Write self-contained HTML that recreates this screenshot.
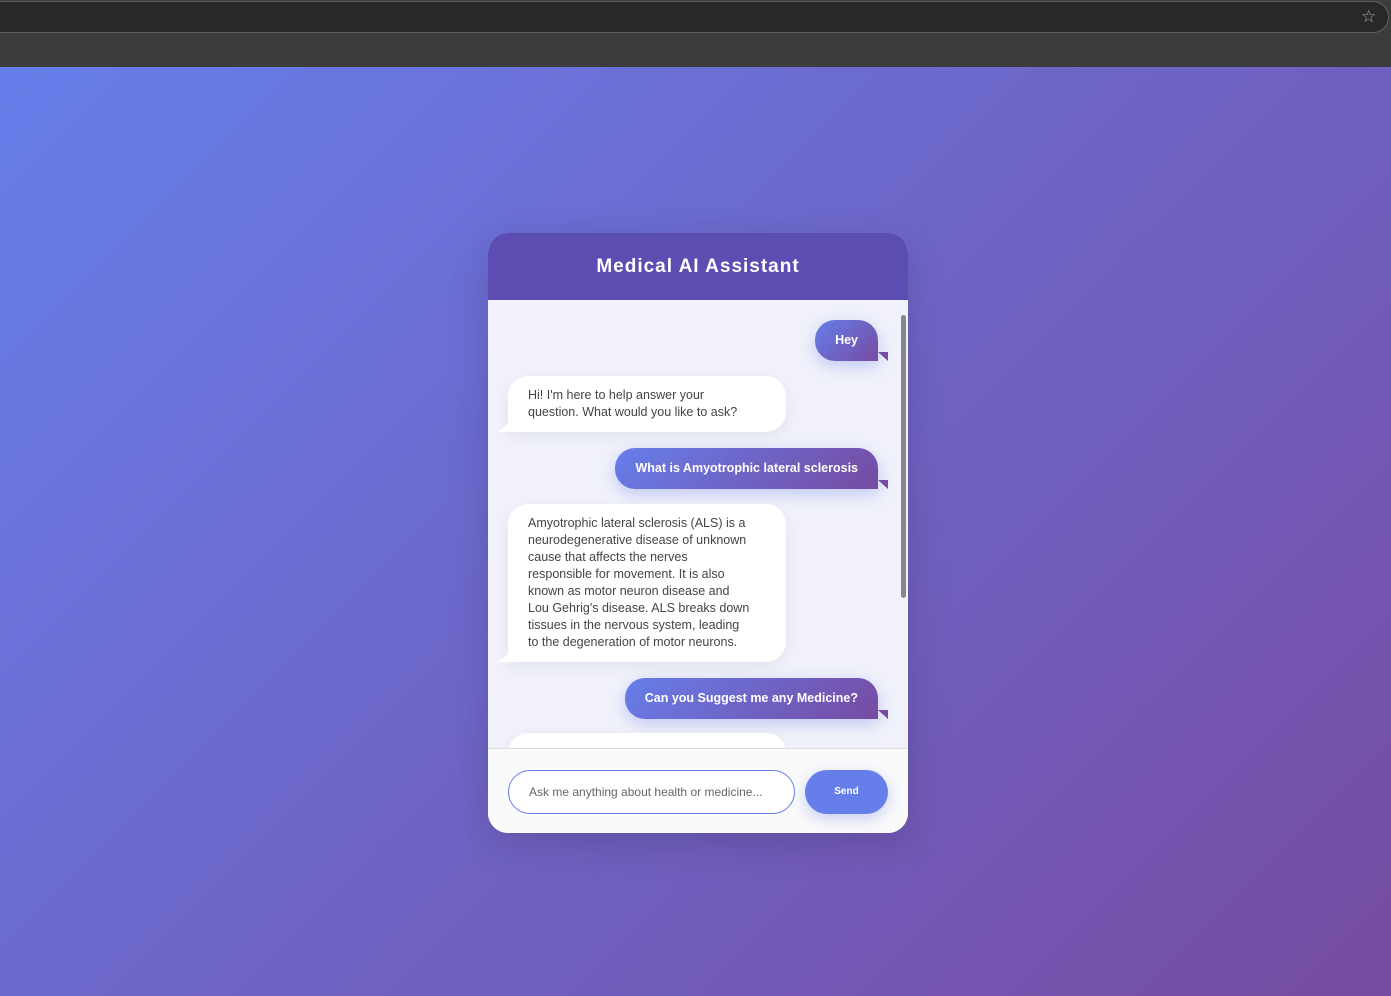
<!DOCTYPE html>
<html><head><meta charset="utf-8"><style>
*{box-sizing:border-box;margin:0;padding:0}
body{width:1391px;height:996px;overflow:hidden;font-family:"Liberation Sans",sans-serif;background:#3c3c3c;position:relative}
.bar{position:absolute;left:-20px;top:1px;width:1409px;height:32px;background:#282828;border:1px solid #5f5f5f;border-radius:16px}
.star{position:absolute;left:1361px;top:8px;color:#aaa;font-size:17px;line-height:17px}
.bg{position:absolute;left:0;top:67px;width:1391px;height:929px;background:linear-gradient(135deg,#667eea 0%,#764ba2 100%)}
.card{position:absolute;left:488px;top:233px;width:420px;height:600px;border-radius:20px;overflow:hidden;background:#f0f1fa;box-shadow:0 10px 40px rgba(0,0,0,.15)}
.hd{height:67px;background:#5b4db2;color:#fff;font-weight:bold;font-size:19px;letter-spacing:1px;text-align:center;line-height:67px}
.msgs{position:absolute;top:67px;left:0;width:420px;height:448px;overflow:hidden}
.m{position:absolute;font-size:12.5px;line-height:17px}
.u{right:30px;background:linear-gradient(135deg,#667eea,#764ba2);color:#fff;font-weight:bold;border-radius:20px 20px 0 20px;padding:0 20px;height:41px;line-height:41px;box-shadow:0 5px 15px rgba(102,126,234,.35)}
.u:after{content:"";position:absolute;right:-10px;bottom:0;border-left:10px solid transparent;border-top:9px solid #764ba2}
.b{left:20px;width:278px;background:#fff;color:#444;border-radius:20px 20px 20px 0;padding:11px 20px;box-shadow:0 5px 15px rgba(0,0,0,.06);white-space:nowrap}
.b:before{content:"";position:absolute;left:-10px;bottom:0;border-right:10px solid #fff;border-top:8px solid transparent}
.sb{position:absolute;right:2px;top:15px;width:5px;height:283px;background:#888;border-radius:3px}
.ft{position:absolute;top:515px;left:0;width:420px;height:85px;background:#fafafa;border-top:1px solid #ddd}
.in{position:absolute;left:20px;top:21px;width:287px;height:44px;border:1px solid #667eea;border-radius:22px;background:#fff;color:#666;font-size:12px;line-height:42px;padding-left:20px}
.send{position:absolute;left:317px;top:21px;width:83px;height:44px;border-radius:22px;background:#667eea;color:#fff;font-size:10px;font-weight:bold;text-align:center;line-height:44px;box-shadow:0 5px 15px rgba(102,126,234,.35)}
</style></head><body>
<div class="bar"></div><div class="star">☆</div>
<div class="bg"></div>
<div class="card">
<div class="hd">Medical AI Assistant</div>
<div class="msgs">
<div class="m u" style="top:20px">Hey</div>
<div class="m b" style="top:76px">Hi! I'm here to help answer your<br>question. What would you like to ask?</div>
<div class="m u" style="top:148px">What is Amyotrophic lateral sclerosis</div>
<div class="m b" style="top:204px">Amyotrophic lateral sclerosis (ALS) is a<br>neurodegenerative disease of unknown<br>cause that affects the nerves<br>responsible for movement. It is also<br>known as motor neuron disease and<br>Lou Gehrig's disease. ALS breaks down<br>tissues in the nervous system, leading<br>to the degeneration of motor neurons.</div>
<div class="m u" style="top:378px">Can you Suggest me any Medicine?</div>
<div class="m b" style="top:433px;height:40px"></div>
<div class="sb"></div>
</div>
<div class="ft"><div class="in">Ask me anything about health or medicine...</div><div class="send">Send</div></div>
</div>
</body></html>
